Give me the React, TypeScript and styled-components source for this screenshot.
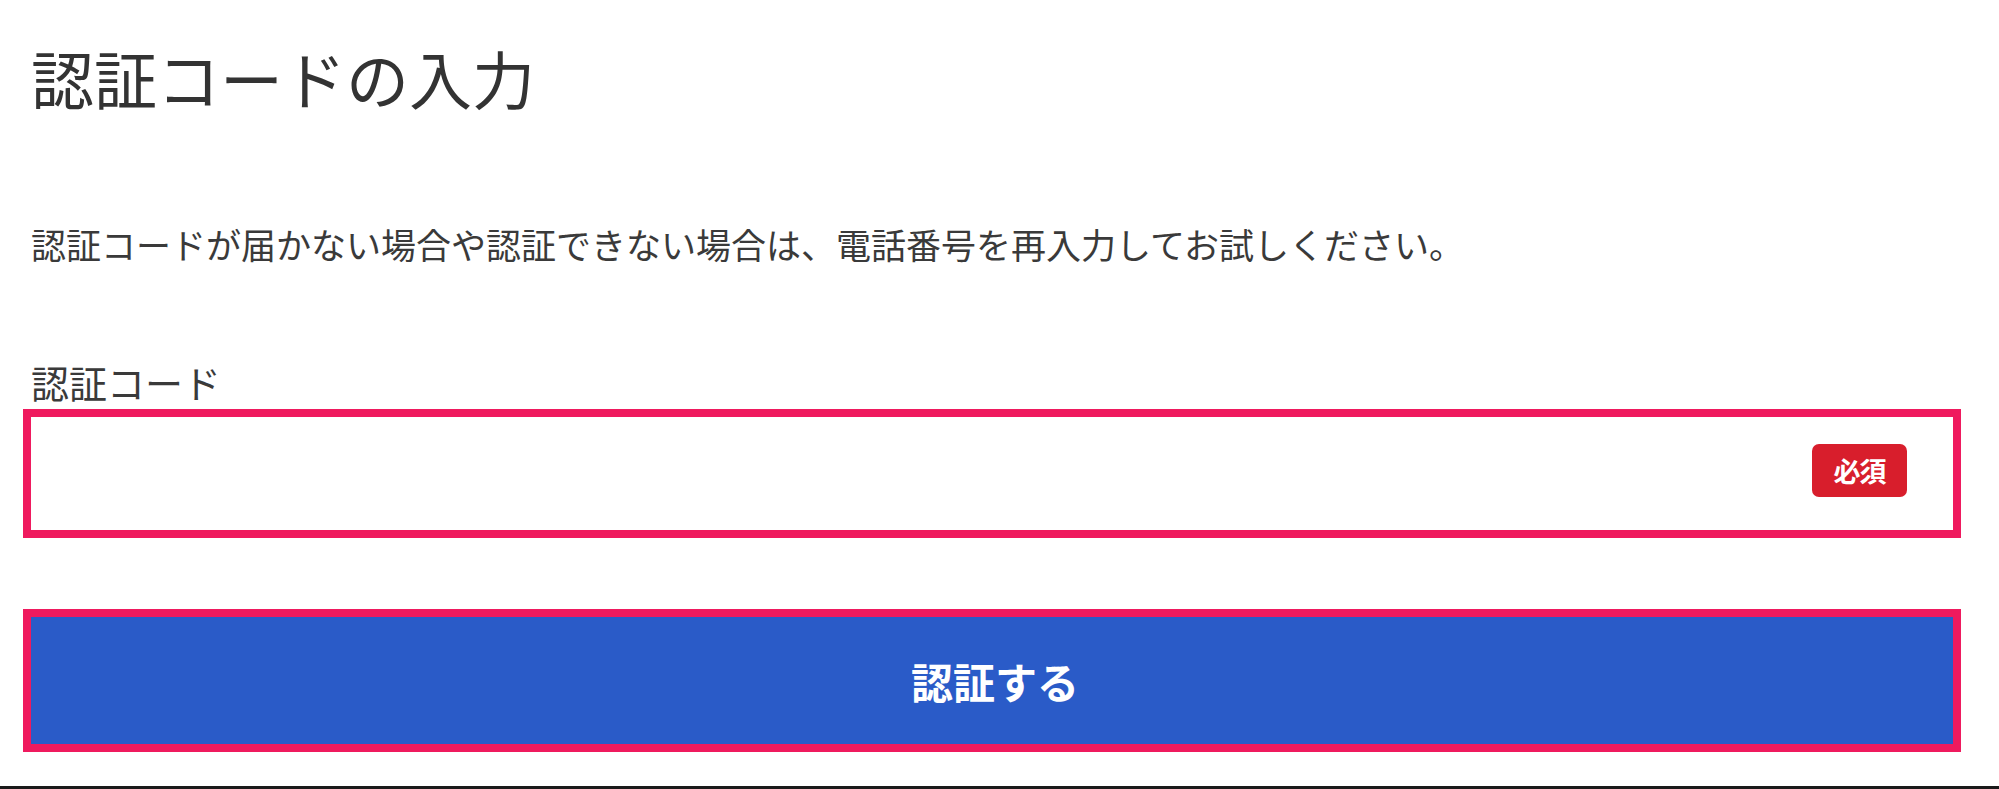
import { createGlobalStyle } from "styled-components";
import styled from "styled-components";

const FONT = `"Noto Sans CJK JP", "Noto Sans", sans-serif`;
const OUTLINE = "#ef1a5e";

const GlobalStyle = createGlobalStyle`
  html, body {
    margin: 0;
    padding: 0;
    background: #ffffff;
  }
  body {
    font-family: ${FONT};
    color: #333333;
  }
`;

const Page = styled.div`
  box-sizing: border-box;
  height: 789px;
  padding: 45px 46px 0 31px;
  border-bottom: 3px solid #1a1a1a;
  display: flex;
  flex-direction: column;
`;

const Title = styled.h1`
  margin: 0;
  font-size: 63px;
  line-height: 63px;
  font-weight: 400;
  color: #333333;
`;

const Description = styled.p`
  margin: 118px 0 0;
  font-size: 35px;
  line-height: 35px;
  color: #3a3a3a;
  white-space: nowrap;
`;

const Label = styled.label`
  margin-top: 102px;
  font-size: 38px;
  line-height: 38px;
  color: #3a3a3a;
`;

const Field = styled.div`
  position: relative;
  margin-top: 16px;
  height: 113px;
  outline: 8px solid ${OUTLINE};
  background: #ffffff;
`;

const Input = styled.input`
  box-sizing: border-box;
  width: 100%;
  height: 100%;
  border: none;
  outline: none;
  padding: 0 24px;
  font-family: ${FONT};
  font-size: 34px;
  background: transparent;
`;

const Badge = styled.span`
  position: absolute;
  right: 46px;
  top: 27px;
  box-sizing: border-box;
  width: 95px;
  height: 53px;
  border-radius: 7px;
  background: #d81e2c;
  color: #ffffff;
  font-size: 27px;
  font-weight: 700;
  display: flex;
  align-items: center;
  justify-content: center;
  letter-spacing: -1px;
`;

const SubmitButton = styled.button`
  margin-top: 87px;
  height: 127px;
  border: none;
  outline: 8px solid ${OUTLINE};
  background: #2a5bc8;
  color: #ffffff;
  font-family: ${FONT};
  font-size: 42px;
  font-weight: 700;
  cursor: pointer;
  display: flex;
  align-items: center;
  justify-content: center;
  padding: 0 0 0 6px;
`;

export default function App() {
  return (
    <>
      <GlobalStyle />
      <Page>
        <Title>認証コードの入力</Title>
        <Description>
          認証コードが届かない場合や認証できない場合は、電話番号を再入力してお試しください。
        </Description>
        <Label htmlFor="code">認証コード</Label>
        <Field>
          <Input id="code" type="text" inputMode="numeric" />
          <Badge>必須</Badge>
        </Field>
        <SubmitButton type="button">認証する</SubmitButton>
      </Page>
    </>
  );
}
